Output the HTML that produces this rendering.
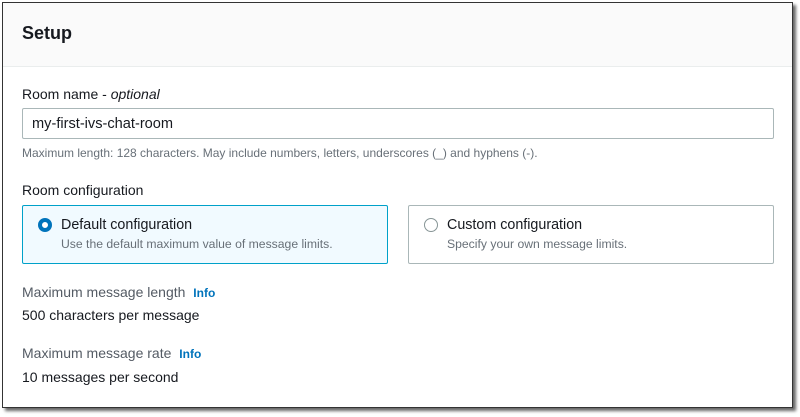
<!DOCTYPE html>
<html><head><style>
*{margin:0;padding:0;box-sizing:border-box}
body{width:800px;height:417px;background:#fff;font-family:"Liberation Sans",sans-serif;position:relative;overflow:hidden}
.frame{position:absolute;left:2px;top:2px;width:791px;height:406px;border:1px solid #333;background:#fff;box-shadow:3px 3px 3px rgba(0,0,0,.6)}
.hdr{position:absolute;left:0;top:0;right:0;height:64px;background:#fafafa;border-bottom:1px solid #eaeded}
.t{position:absolute;white-space:nowrap}
.card{position:absolute;top:205px;height:59px;width:366px;border:1px solid #aab7b8;border-radius:2px}
.sel{background:#f1faff;border-color:#00a1c9}
.rad{position:absolute;left:15px;top:12px;width:14px;height:14px;border-radius:50%}
</style></head><body>
<div class="frame">
<div class="hdr"></div>
</div>
<div class="t" style="left:22px;top:23px;font-size:18px;font-weight:bold;color:#16191f">Setup</div>
<div class="t" style="left:22px;top:86px;font-size:14px;color:#16191f">Room name - <i>optional</i></div>
<div style="position:absolute;left:22px;top:108px;width:752px;height:31px;border:1px solid #aab7b8;border-radius:2px"></div>
<div class="t" style="left:32px;top:116px;font-size:14.6px;color:#16191f">my-first-ivs-chat-room</div>
<div class="t" style="left:22px;top:146px;font-size:12px;color:#687078">Maximum length: 128 characters. May include numbers, letters, underscores (_) and hyphens (-).</div>
<div class="t" style="left:22px;top:182px;font-size:14px;color:#16191f">Room configuration</div>
<div class="card sel" style="left:22px"><div class="rad" style="border:4px solid #0073bb;background:#fff"></div>
<div class="t" style="left:38px;top:11px;font-size:14.3px;color:#16191f">Default configuration</div>
<div class="t" style="left:38px;top:31px;font-size:12.2px;color:#687078">Use the default maximum value of message limits.</div></div>
<div class="card" style="left:408px"><div class="rad" style="border:1px solid #879596;background:#fff"></div>
<div class="t" style="left:38px;top:11px;font-size:14.3px;color:#16191f">Custom configuration</div>
<div class="t" style="left:38px;top:31px;font-size:12.2px;color:#687078">Specify your own message limits.</div></div>
<div class="t" style="left:22px;top:284px;font-size:14px;color:#545b64">Maximum message length <b style="color:#0073bb;font-size:12px;margin-left:4px">Info</b></div>
<div class="t" style="left:22px;top:307px;font-size:14px;color:#16191f">500 characters per message</div>
<div class="t" style="left:22px;top:345px;font-size:14px;color:#545b64">Maximum message rate <b style="color:#0073bb;font-size:12px;margin-left:4px">Info</b></div>
<div class="t" style="left:22px;top:369px;font-size:14px;color:#16191f">10 messages per second</div>
</body></html>
